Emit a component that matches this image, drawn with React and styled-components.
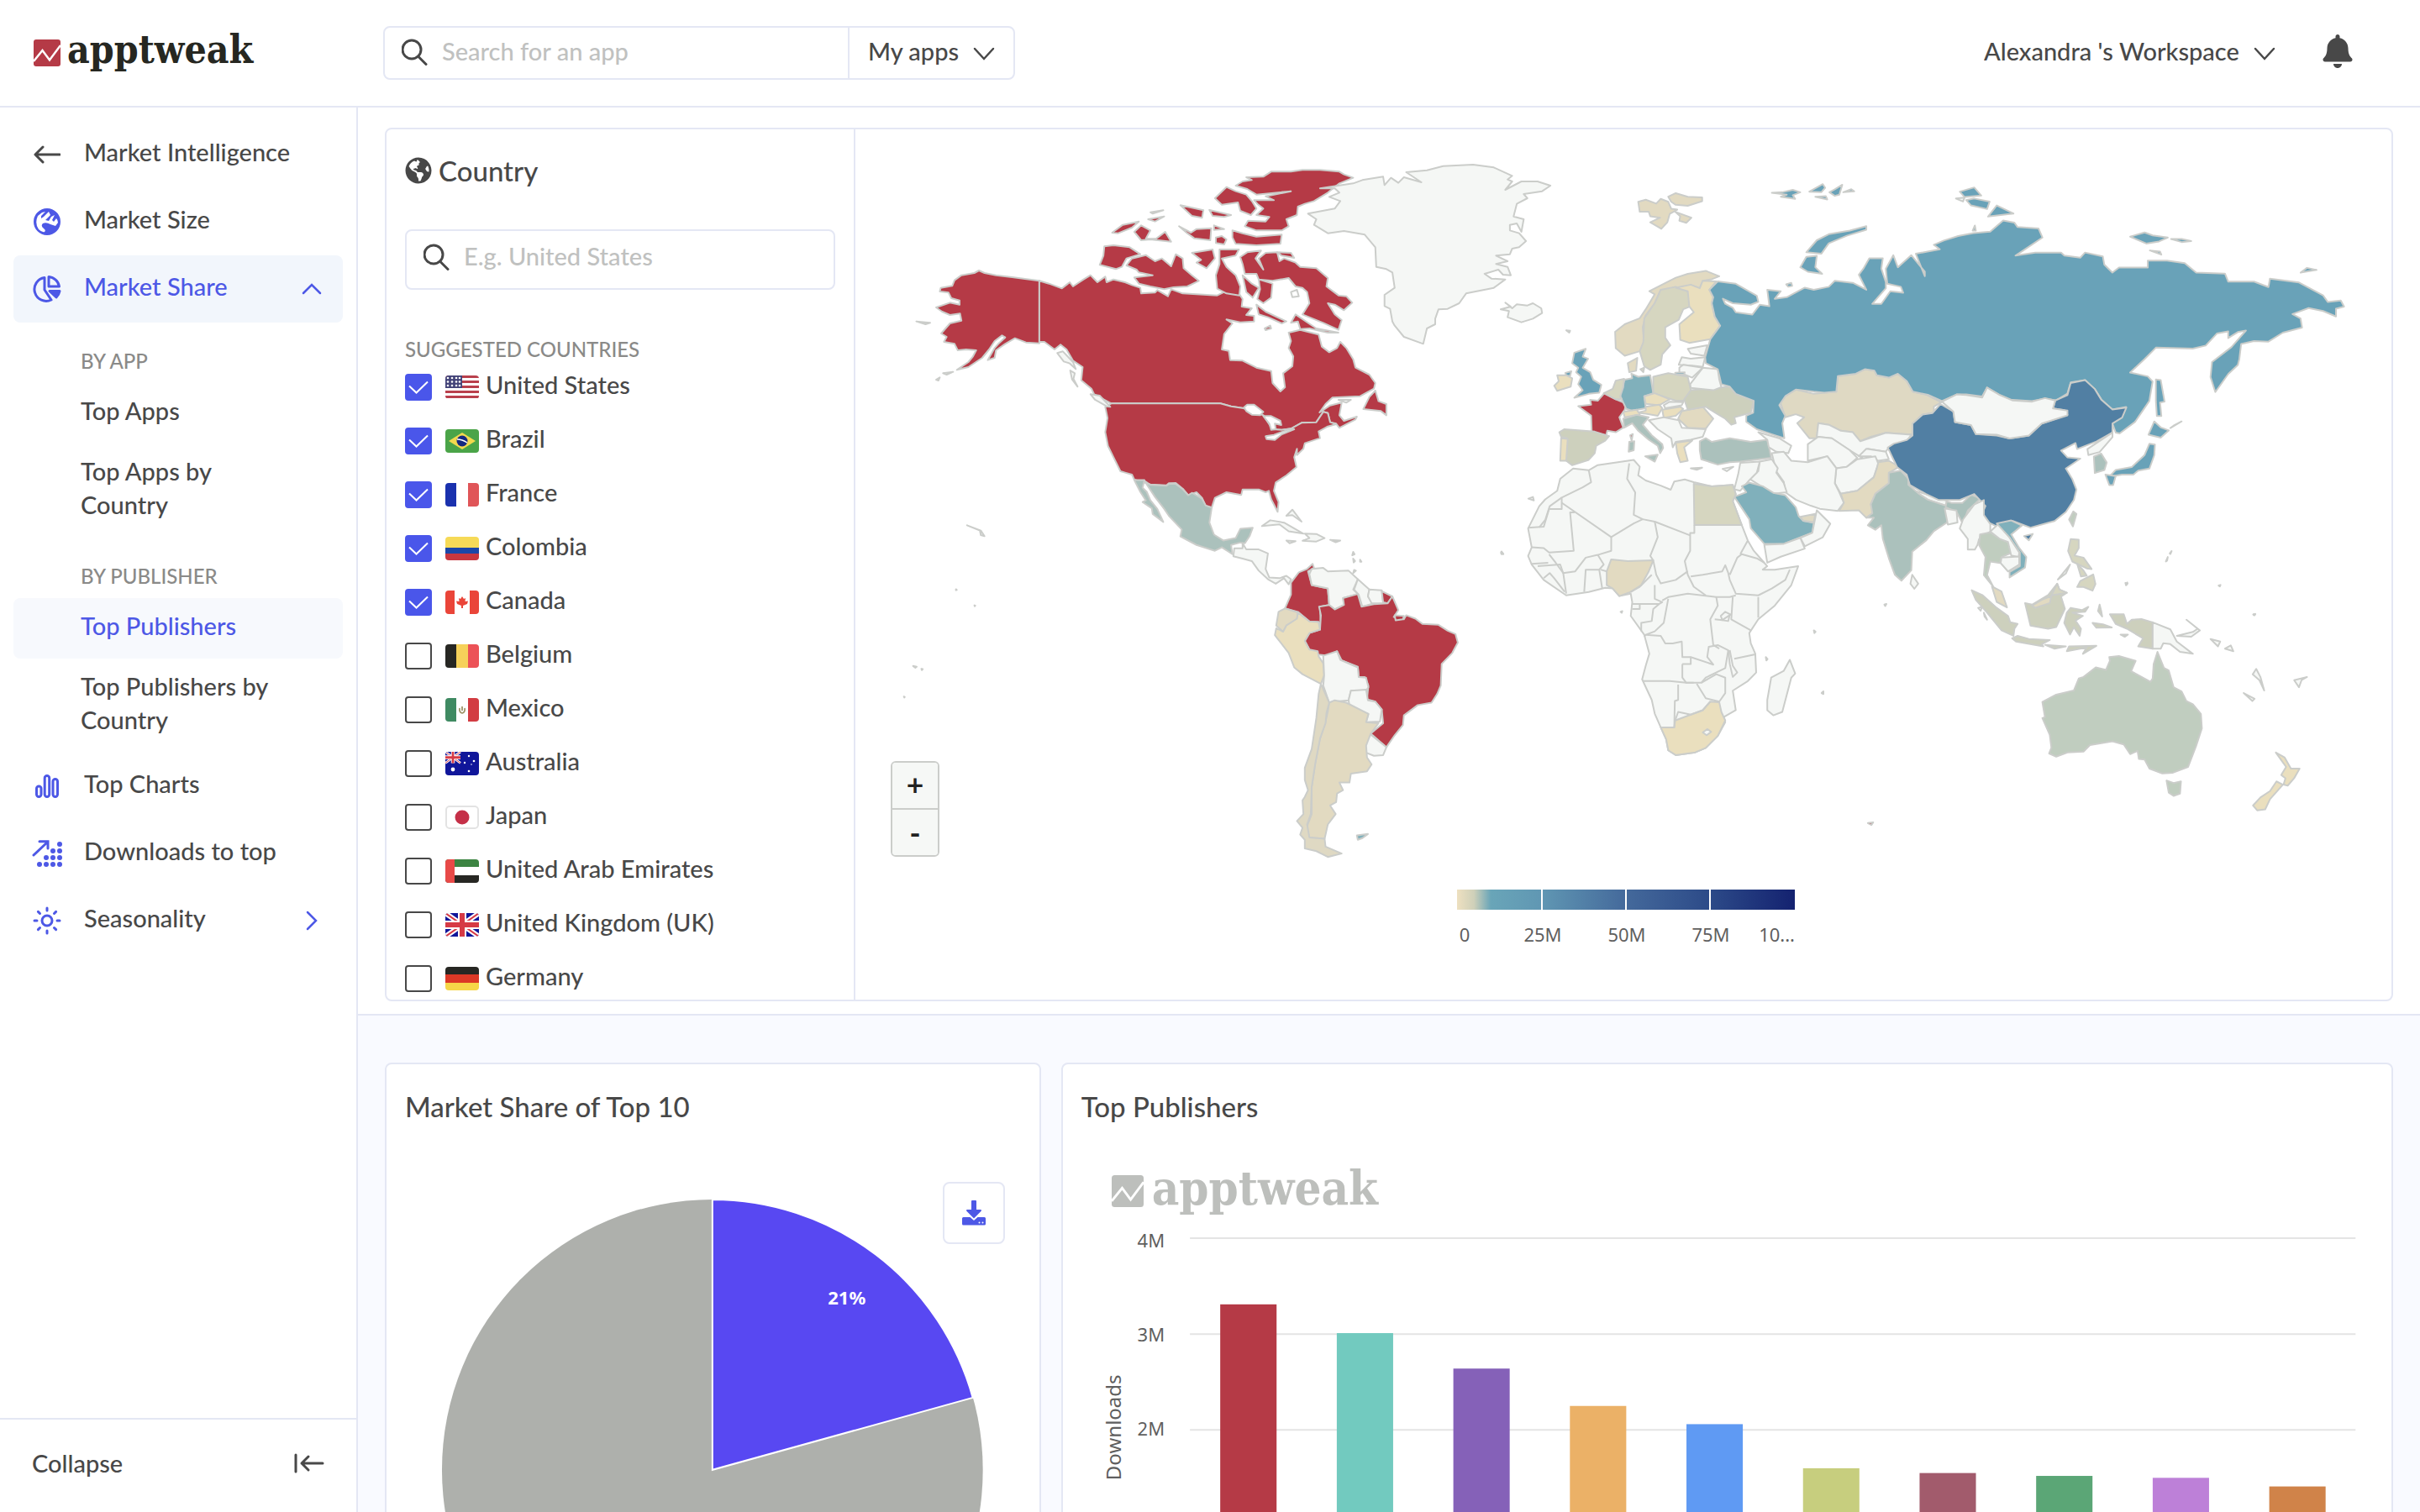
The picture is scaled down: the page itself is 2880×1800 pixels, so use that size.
import React, { Component } from 'react'
import styled, { createGlobalStyle, css } from 'styled-components'
import { FaBell, FaGlobeAmericas } from 'react-icons/fa'
import { Sun } from 'lucide-react'

const colors = {
  text: '#484848',
  dark: '#262721',
  muted: '#8a8a88',
  placeholder: '#c0c1c0',
  blue: '#4d58e6',
  border: '#e4e7f4',
  active: '#f2f6fc',
  subActive: '#f7f9fd',
  page: '#f9faff',
  red: '#b53a46',
  land: '#f5f7f5',
  coast: '#cbcdca',
  axis: '#5f5f5f',
}

const font = `Lato, 'Open Sans', sans-serif`
const chartFont = `'Noto Sans', 'Open Sans', sans-serif`

const GlobalStyle = createGlobalStyle`
  *, *::before, *::after {
    box-sizing: border-box;
  }

  body {
    margin: 0;
    font-family: ${font};
    font-size: 29px;
    font-weight: 500;
    line-height: 40px;
    color: ${colors.text};
    background: white;
  }

  button, input, select {
    font: inherit;
    color: inherit;
  }
`

/* ---------- layout ---------- */

const box = css`
  border: 2px solid ${colors.border};
  border-radius: 8px;
  background: white;
`

const bareButton = css`
  border: 0;
  padding: 0;
  background: none;
  cursor: pointer;
`

const Page = styled.div`
  display: flex;
  flex-direction: column;
  height: 100vh;
  overflow: hidden;
`

const Header = styled.header`
  display: flex;
  align-items: center;
  flex-shrink: 0;
  height: 128px;
  padding: 0 78px 0 40px;
  border-bottom: 2px solid ${colors.border};
`

const Brand = styled.a`
  display: flex;
  align-items: center;
  gap: 8px;
  width: 416px;
  color: ${colors.dark};
  text-decoration: none;
`

const Wordmark = styled.span`
  font-family: 'DejaVu Serif Condensed', 'DejaVu Serif', serif;
  font-size: ${props => (props.$large ? '56px' : '46px')};
  font-weight: bold;
  line-height: 56px;
  margin-top: -8px;
`

const SearchBar = styled.div`
  ${box}
  display: flex;
  width: 752px;
  height: 64px;
`

const SearchField = styled.div`
  display: flex;
  align-items: center;
  gap: 16px;
  flex: 1;
  min-width: 0;
  padding: 0 20px 2px;
`

const Input = styled.input`
  flex: 1;
  min-width: 0;
  padding: 0 0 2px;
  border: 0;
  outline: 0;
  background: none;

  &::placeholder {
    color: ${colors.placeholder};
    opacity: 1;
  }
`

const AppPicker = styled.div`
  display: flex;
  align-items: center;
  padding: 0 22px;
  border-left: 2px solid ${colors.border};
`

const SelectBox = styled.div`
  display: grid;
  align-items: center;

  > * {
    grid-area: 1 / 1;
  }

  svg {
    justify-self: end;
    pointer-events: none;
  }
`

const Select = styled.select`
  appearance: none;
  padding: 0 42px 4px 0;
  border: 0;
  outline: 0;
  background: none;
  cursor: pointer;
`

const Account = styled.div`
  display: flex;
  align-items: center;
  gap: 54px;
  margin-left: auto;
`

const BellButton = styled.button`
  ${bareButton}
  display: flex;
  padding-bottom: 4px;
`

const Body = styled.div`
  display: flex;
  flex: 1;
  min-height: 0;
`

const Sidebar = styled.aside`
  display: flex;
  flex-direction: column;
  flex-shrink: 0;
  width: 426px;
  border-right: 2px solid ${colors.border};
`

const Nav = styled.nav`
  flex: 1;
  padding: 16px;
`

const NavLink = styled.a`
  display: flex;
  align-items: center;
  gap: 28px;
  height: 80px;
  padding: 0 24px;
  border-radius: 8px;
  color: ${props => (props.$active ? colors.blue : colors.text)};
  background: ${props => (props.$active ? colors.active : 'none')};
  text-decoration: none;

  > svg {
    margin-left: auto;
  }
`

const NavText = styled.span`
  padding-bottom: 6px;
`

const NavIcon = styled.div`
  display: flex;
  justify-content: center;
  width: 32px;
  flex-shrink: 0;

  svg {
    flex-shrink: 0;
  }
`

const NavLabel = styled.div`
  padding: 26px 80px 6px;
  font-size: 24px;
  color: ${colors.muted};
`

const SubLink = styled.a`
  display: block;
  padding: 13px 80px 19px;
  border-radius: 8px;
  color: ${props => (props.$active ? colors.blue : colors.text)};
  background: ${props => (props.$active ? colors.subActive : 'none')};
  text-decoration: none;
`

const Collapse = styled.button`
  ${bareButton}
  display: flex;
  align-items: center;
  justify-content: space-between;
  height: 112px;
  padding: 0 38px 6px;
  border-top: 2px solid ${colors.border};
`

const Main = styled.main`
  flex: 1;
  min-width: 0;
  background: ${colors.page};
`

const Top = styled.section`
  padding: 24px 32px 15px;
  border-bottom: 2px solid ${colors.border};
  background: white;
`

const MapPanel = styled.div`
  ${box}
  display: grid;
  grid-template-columns: 558px 1fr;
`

const Countries = styled.div`
  height: 0;
  min-height: 100%;
  padding: 0 22px;
  border-right: 2px solid ${colors.border};
  overflow: hidden;
`

const PanelHead = styled.div`
  display: flex;
  align-items: center;
  gap: 8px;
  padding: 29px 0 30px;
`

const Title = styled.h2`
  margin: 0;
  font-size: 33px;
  font-weight: 500;
  line-height: 40px;
`

const CountrySearch = styled.div`
  ${box}
  display: flex;
  align-items: center;
  gap: 16px;
  height: 72px;
  margin: 20px 0 58px;
  padding: 0 20px 6px;
`

const ListLabel = styled.div`
  font-size: 24px;
  line-height: 26px;
  color: ${colors.muted};
`

const CountryRow = styled.label`
  display: flex;
  align-items: center;
  height: 64px;
  cursor: pointer;
`

const CountryName = styled.span`
  padding-bottom: 6px;
`

const Check = styled.div`
  display: grid;
  margin-right: 16px;

  > * {
    grid-area: 1 / 1;
    pointer-events: none;
  }
`

const Checkbox = styled.input`
  appearance: none;
  width: 32px;
  height: 32px;
  margin: 0;
  border: 2px solid ${colors.text};
  border-radius: 4px;
  background: white;

  &:checked {
    border-color: #4a56ea;
    background: #4a56ea;
  }
`

const Flag = styled.svg`
  width: 40px;
  height: 28px;
  margin-right: 8px;
  border-radius: 4px;
`

const MapArea = styled.div`
  position: relative;
`

const ChartSvg = styled.svg`
  display: block;
  width: 100%;
`

const AxisText = styled.text`
  font-family: ${chartFont};
  font-size: 22px;
  font-weight: 400;
  fill: ${colors.axis};
  text-anchor: ${props => props.$anchor};
`

const AxisTitle = styled.text`
  font-family: ${chartFont};
  font-size: 24px;
  font-weight: 400;
  fill: ${colors.axis};
  text-anchor: middle;
`

const SliceText = styled.text`
  font-family: ${chartFont};
  font-size: 22px;
  font-weight: bold;
  fill: white;
  text-anchor: middle;
`

const Zoom = styled.div`
  position: absolute;
  left: 42px;
  bottom: 170px;
  display: flex;
  flex-direction: column;
  width: 58px;
  border: 2px solid ${colors.coast};
  border-radius: 6px;
  overflow: hidden;
`

const ZoomButton = styled.button`
  ${bareButton}
  height: 54px;
  background: #f6f8f6;
  color: #222;
  font-family: ${chartFont};
  font-size: 36px;
  font-weight: 600;

  & + & {
    height: 56px;
    border-top: 2px solid ${colors.coast};
  }
`

const Cards = styled.section`
  display: grid;
  grid-template-columns: repeat(12, 1fr);
  gap: 24px;
  padding: 56px 32px;
`

const Card = styled.article`
  ${box}
  grid-column: span ${props => props.$span};
  min-width: 0;
`

const CardHead = styled.div`
  padding: 30px 22px 41px;
`

const ChartArea = styled.div`
  position: relative;
`

const Download = styled.button`
  ${box}
  position: absolute;
  top: 29px;
  right: 41px;
  display: grid;
  place-items: center;
  width: 74px;
  height: 74px;
  cursor: pointer;
`

const Watermark = styled.div`
  position: absolute;
  top: 16px;
  left: 58px;
  display: flex;
  align-items: center;
  gap: 10px;
  color: #bdbfbc;
`

/* ---------- icons ---------- */

const SearchIcon = () => (
  <svg width="32" height="32" viewBox="0 0 32 32" fill="none" stroke={colors.text} strokeWidth="3" aria-hidden="true">
    <circle cx="12" cy="13" r="11" />
    <path d="M19.500 21 L29 30.500" strokeLinecap="round" />
  </svg>
)

const chevrons = {
  down: 'M2 8 L13 20 L24 8',
  up: 'M3 18 L13 8 L23 18',
  right: 'M8 3 L18 13 L8 23',
}

const Chevron = ({ to = 'down', color = colors.text }) => (
  <svg width="26" height="26" viewBox="0 0 26 26" fill="none" stroke={color} strokeWidth="2.5" strokeLinecap="round" aria-hidden="true">
    <path d={chevrons[to]} />
  </svg>
)

const BackIcon = () => (
  <svg width="32" height="32" viewBox="0 0 32 32" fill="none" stroke={colors.text} strokeWidth="3" strokeLinecap="round" strokeLinejoin="round">
    <path d="M31 16 H2 M11 7 L2 16 L11 25" />
  </svg>
)

const WorldIcon = () => (
  <svg width="32" height="32" viewBox="0 0 32 32" fill="none">
    <circle cx="16" cy="16" r="14.500" fill={colors.blue} stroke={colors.blue} strokeWidth="3" />
    <path d="M5 9 Q1 18 6 25 Q10 29 13 28 Q15 26 12 24 Q8 21 11 18 Q15 16 20 19 L26 21 L29 17 Q29 14 27 12 L24 16 L22 14 L25 8 L21 10 L18 15 L14 14 L20 8 L18 4 L12 10 L9 12 L9 9 L14 4 L10 5 Z" fill="white" />
  </svg>
)

const ShareIcon = () => (
  <svg width="34" height="32" viewBox="0 0 34 32" fill="none" stroke={colors.blue} strokeWidth="3" strokeLinejoin="round">
    <path d="M14 2.500 A14 14 0 1 0 22 29 L14 17 Z" />
    <path d="M19 1.500 A14 14 0 0 1 31.500 13 H19 Z" />
    <path d="M20 18.500 H32 A14 14 0 0 1 28 26 Z" fill={colors.blue} />
  </svg>
)

const ChartsIcon = () => (
  <svg width="32" height="32" viewBox="0 0 32 32" fill="none" stroke={colors.blue} strokeWidth="3">
    <rect x="3.500" y="16" width="5.500" height="12.500" rx="2.700" />
    <rect x="13.200" y="3.500" width="5.500" height="25" rx="2.700" />
    <rect x="23" y="7.500" width="5.500" height="21" rx="2.700" />
  </svg>
)

const dots = [
  [33, 5],
  [25, 13], [33, 13],
  [17, 21], [25, 21], [33, 21],
  [9, 29], [17, 29], [25, 29], [33, 29],
]

const DownloadsIcon = () => (
  <svg width="36" height="32" viewBox="0 0 36 32" fill="none" stroke={colors.blue} strokeWidth="3" strokeLinecap="round">
    <path d="M2 18 L19 2 M9 1.800 H19 V10" />
    {dots.map(([x, y]) => (
      <circle key={`${x}-${y}`} cx={x} cy={y} r="3" fill={colors.blue} stroke="none" />
    ))}
  </svg>
)

const CollapseIcon = () => (
  <svg width="36" height="24" viewBox="0 0 36 24" fill="none" stroke={colors.text} strokeWidth="3" strokeLinecap="round" strokeLinejoin="round">
    <path d="M2 2 V22 M34 12 H9 M17 4 L9 12 L17 20" />
  </svg>
)

const DownloadIcon = () => (
  <svg width="28" height="30" viewBox="0 0 28 30" fill={colors.blue} aria-hidden="true">
    <path d="M11 1 a1 1 0 0 1 1-1 h4 a1 1 0 0 1 1 1 V11 H22 a1 1 0 0 1 .7 1.700 L14 21.500 L5.300 12.700 A1 1 0 0 1 6 11 H11 Z" />
    <path d="M0 21.500 a1.500 1.500 0 0 1 1.500-1.500 H9.500 L14 24 L18.500 20 H26.500 a1.500 1.500 0 0 1 1.500 1.500 V28 a1.500 1.500 0 0 1 -1.500 1.500 H1.500 a1.500 1.500 0 0 1 -1.500 -1.500 Z" />
    <circle cx="20.500" cy="26.500" r="1" fill="white" />
    <circle cx="24.500" cy="26.500" r="1" fill="white" />
  </svg>
)

const LogoMark = ({ size, fill }) => (
  <svg width={size} height={size} viewBox="0 0 32 32" aria-hidden="true">
    <rect width="32" height="32" rx="3" fill={fill} />
    <path d="M0 26 L10.500 13 L19 24.500 L32 7" fill="none" stroke="white" strokeWidth="2.500" />
  </svg>
)

/* ---------- flags, all on a 40 x 28 field ---------- */

const bands = (list, vertical) =>
  list.map(([fill, at, size], i) =>
    vertical ? (
      <rect key={i} x={at} width={size} height="28" fill={fill} />
    ) : (
      <rect key={i} y={at} width="40" height={size} fill={fill} />
    )
  )

const UnionJack = () => (
  <g>
    <rect width="40" height="28" fill="#10169a" />
    <path d="M0 0 L40 28 M40 0 L0 28" stroke="white" strokeWidth="6" />
    <path d="M0 0 L40 28 M40 0 L0 28" stroke="#d63a45" strokeWidth="2" />
    <path d="M20 0 V28 M0 14 H40" stroke="white" strokeWidth="10" />
    <path d="M20 0 V28 M0 14 H40" stroke="#d63a45" strokeWidth="6" />
  </g>
)

const flags = {
  us: (
    <g>
      <rect width="40" height="28" fill="white" />
      {[0, 6, 12, 18, 24].map(y => (
        <rect key={y} y={y} width="40" height="3" fill="#b9404c" />
      ))}
      <rect width="20" height="15" fill="#444479" />
      {[3, 7.5, 12].map(y =>
        [3, 8, 13, 17].map(x => <circle key={`${x}-${y}`} cx={x} cy={y} r="1.300" fill="white" />)
      )}
    </g>
  ),
  br: (
    <g>
      <rect width="40" height="28" fill="#4aa448" />
      <path d="M4 14 L20 4 L36 14 L20 24 Z" fill="#f2d94e" />
      <circle cx="20" cy="14" r="6.500" fill="#152880" />
      <path d="M14 12 Q20 12 26 16" fill="none" stroke="white" strokeWidth="1.500" />
    </g>
  ),
  fr: bands([['#1a31ae', 0, 13], ['white', 13, 14], ['#e05558', 27, 13]], true),
  co: bands([['#f6da57', 0, 13], ['#1b47a8', 13, 7], ['#c8373f', 20, 8]]),
  ca: (
    <g>
      {bands([['#ea4539', 0, 11], ['white', 11, 18], ['#ea4539', 29, 11]], true)}
      <path d="M20 7 L22 10 L24 9 L23.500 13 L27 12.500 L26 16 L21 18 V21 H19 V18 L14 16 L13 12.500 L16.500 13 L16 9 L18 10 Z" fill="#ea4539" />
    </g>
  ),
  be: bands([['#272723', 0, 13], ['#f6d15a', 13, 14], ['#ec5257', 27, 13]], true),
  mx: (
    <g>
      {bands([['#3f8a62', 0, 13], ['white', 13, 14], ['#d23c42', 27, 13]], true)}
      <path d="M17 12 Q16 17 20 18 Q24 17 23 12 M20 10 V15" fill="none" stroke="#9d9468" strokeWidth="1.800" />
    </g>
  ),
  au: (
    <g>
      <rect width="40" height="28" fill="#10169a" />
      <g transform="scale(.45 .48)"><UnionJack /></g>
      {[[28, 5, 1.2], [34, 11, 1.3], [23, 13, 1.2], [31, 15, 0.8], [28, 23, 1.3], [9, 21, 2.4]].map(([x, y, r]) => (
        <circle key={`${x}-${y}`} cx={x} cy={y} r={r} fill="white" />
      ))}
    </g>
  ),
  jp: (
    <g>
      <rect x="1" y="1" width="38" height="26" rx="4" fill="white" stroke="#e3e3e3" strokeWidth="2" />
      <circle cx="20" cy="14" r="8.500" fill="#c53048" />
    </g>
  ),
  ae: (
    <g>
      {bands([['#3c8442', 0, 9], ['white', 9, 10], ['#272723', 19, 9]])}
      <rect width="11" height="28" fill="#e84a48" />
    </g>
  ),
  gb: <UnionJack />,
  de: bands([['#272723', 0, 9], ['#dc3826', 9, 10], ['#f6d648', 19, 9]]),
}

const countries = [
  ['us', 'United States'],
  ['br', 'Brazil'],
  ['fr', 'France'],
  ['co', 'Colombia'],
  ['ca', 'Canada'],
  ['be', 'Belgium'],
  ['mx', 'Mexico'],
  ['au', 'Australia'],
  ['jp', 'Japan'],
  ['ae', 'United Arab Emirates'],
  ['gb', 'United Kingdom (UK)'],
  ['de', 'Germany'],
]

/* ---------- world map ---------- */

const fills = {
  r: colors.red,
  l: colors.land,
  w: '#ffffff',
  ru: '#69a2b8',
  cn: '#517fa3',
  sa: '#80b0bb',
  mx: '#abc1bc',
  au: '#c0cdbf',
  se: '#d6d6c0',
  es: '#cdd0bd',
  kz: '#dfd9c3',
  no: '#e2dac1',
  fi: '#eadfbe',
}

// each sheet of outlines keeps its own grid, placed on the map by its transform
const sheets = [
  {
    transform: 'translate(22 7) scale(.54847 .33333)',
    shapes: [
      ['r', '359,520 300,507 265,500 240,492 228,483 218,492 190,500 175,518 170,538 145,545 143,558 162,562 168,582 186,590 186,605 165,598 135,615 148,630 165,642 187,637 190,662 165,672 146,708 158,720 152,738 175,745 182,768 200,765 222,768 215,790 205,810 180,838 205,828 235,795 250,765 262,735 278,715 285,722 270,745 262,760 247,803 262,795 265,768 285,745 306,725 330,740 359,743'],
      ['r', '359,520 380,530 408,547 425,525 432,540 455,515 470,500 485,525 502,505 505,525 520,515 545,525 560,535 578,545 580,565 610,562 615,553 638,575 645,550 670,565 745,572 760,560 765,545 790,560 800,585 798,612 820,618 808,642 825,645 825,665 795,668 765,658 778,672 760,710 755,765 770,770 773,803 800,805 830,830 862,842 865,885 882,915 892,900 888,850 908,825 910,790 900,760 905,735 900,705 925,695 965,712 972,755 988,775 1005,760 1012,738 1025,760 1040,800 1045,830 1075,855 1088,885 1085,905 1055,932 995,937 980,960 967,990 990,965 1015,955 1010,1000 1020,1020 1048,1005 1045,1015 1010,1045 1003,1030 990,1025 985,992 975,988 960,1025 928,1027 905,1048 885,1052 865,1050 845,1000 802,975 775,968 752,958 515,958 478,925 472,905 450,875 453,828 432,805 418,765 405,748 392,765 370,738 359,738'],
      ['r', '515,958 752,958 775,968 802,975 845,1000 865,1050 885,1052 905,1048 928,1027 960,1025 975,988 985,992 990,1025 1003,1032 985,1040 965,1058 968,1082 935,1100 932,1120 918,1142 918,1120 912,1150 917,1185 895,1215 872,1240 868,1270 878,1310 876,1345 862,1300 857,1270 850,1275 835,1265 800,1265 797,1285 765,1275 740,1295 733,1330 720,1325 712,1295 700,1275 682,1285 670,1262 655,1242 640,1243 635,1250 600,1247 565,1230 560,1212 545,1205 535,1200 520,1150 508,1110 502,1060 507,1010 502,970'],
      ['w', '803,972 810,962 825,962 845,988 838,1000 820,998 808,985'],
      ['w', '845,1003 862,1003 882,1020 884,1035 870,1030 872,1050 862,1052 858,1030'],
      ['w', '850,1075 868,1070 905,1048 912,1050 885,1068 870,1088 852,1085'],
      ['l', '470,925 490,930 513,970 505,968 480,945'],
      ['l', '398,778 410,772 432,810 438,835 425,815 412,808'],
      ['l', '426,840 436,850 433,870 442,898 430,872'],
      ['r', '785,180 800,165 820,160 808,150 845,148 862,130 905,130 930,124 968,124 1010,130 1020,140 1040,152 1010,172 985,205 955,235 935,245 920,255 918,285 895,300 900,325 885,340 830,340 805,325 812,305 850,308 858,292 830,285 845,262 832,245 825,232 868,232 850,218 905,200 830,212 810,192'],
      ['r', '765,185 740,225 755,248 790,240 795,270 818,285 830,262 820,235 808,212 785,200'],
      ['r', '778,340 800,350 830,362 885,355 882,388 830,393 785,388 778,365'],
      ['r', '500,397 520,393 555,400 578,425 548,440 538,470 525,478 490,463 498,430'],
      ['r', '548,465 560,440 590,428 610,450 625,440 645,468 655,425 670,440 672,475 690,500 705,520 680,540 650,543 630,550 600,540 575,530 565,508 605,500 575,490 570,480'],
      ['r', '690,420 735,408 740,440 722,475 700,455 710,445'],
      ['r', '750,408 792,408 785,430 755,440 765,470 785,500 795,540 793,572 765,565 745,548 742,500 750,460'],
      ['r', '565,345 580,375 600,372 645,380 632,345 612,370 590,370 600,340 580,322'],
      ['r', '517,348 540,320 575,308 560,330 530,350'],
      ['r', '665,250 715,268 712,295 690,288'],
      ['r', '662,325 688,348 700,335 732,332 730,375 695,368 680,350'],
      ['r', '728,267 775,285 760,292 735,288'],
      ['r', '595,300 630,290 610,308'],
      ['r', '600,275 628,268 605,280'],
      ['r', '742,365 755,360 765,372 760,390 742,385'],
      ['r', '738,322 760,335 738,338'],
      ['r', '800,460 795,435 810,418 840,412 828,440 845,480 835,440 850,420 875,418 880,450 890,440 915,455 925,470 960,475 985,510 982,540 1008,572 1025,575 1038,598 1020,625 1000,605 985,600 1000,640 1015,660 1008,695 975,670 930,640 945,600 940,560 930,545 915,540 900,510 865,520 835,515 830,495 805,495'],
      ['r', '875,418 905,420 912,438 885,430'],
      ['r', '835,515 865,530 862,580 845,600 832,585 838,550'],
      ['r', '800,500 820,530 835,545 822,580 808,560'],
      ['r', '830,605 850,630 895,665 885,672 855,650 835,640'],
      ['w', '905,560 918,552 922,575 908,578'],
      ['r', '915,640 960,690 1008,705 985,705 945,690 925,692 920,665 905,670'],
      ['r', '848,690 860,680 862,690 850,696'],
      ['r', '1088,912 1075,935 1062,978 1100,985 1112,1000 1112,960 1095,950'],
      ['l', '1008,945 1035,945 1025,955'],
      ['l', '1040,172 1060,160 1105,148 1108,178 1122,152 1138,170 1150,150 1188,168 1155,132 1200,125 1235,110 1300,105 1345,115 1385,145 1375,158 1385,165 1370,195 1405,165 1440,165 1468,180 1450,200 1410,210 1418,225 1395,245 1388,290 1410,300 1405,345 1395,315 1380,320 1380,340 1400,350 1415,378 1400,400 1385,405 1380,425 1350,430 1375,450 1350,460 1375,470 1382,500 1365,498 1355,480 1325,495 1340,512 1370,515 1345,545 1285,565 1270,600 1245,620 1225,622 1218,655 1218,675 1200,690 1192,745 1150,720 1130,680 1125,665 1120,620 1108,610 1108,570 1130,545 1125,490 1112,478 1090,470 1088,400 1065,355 1020,342 985,350 955,320 960,300 942,280 1000,262 1012,235 988,220 1010,205 1000,190 968,190'],
      ['l', '1370,598 1382,612 1360,622 1378,628 1375,650 1405,668 1430,655 1450,635 1448,618 1430,600 1418,608 1395,604 1385,618'],
      ['l', '92,665 122,670 112,675'],
      ['l', '135,873 143,865 140,876'],
      ['l', '150,850 172,845 158,855'],
      ['l', '202,1393 232,1412 240,1432 232,1428 230,1412'],
    ],
  },
  {
    transform: 'translate(22 407) scale(.54847 .40816)',
    shapes: [
      ['mx', '565,26 587,26 583,48 592,60 600,85 615,110 628,148 605,125 603,108 583,90 590,85 578,60'],
      ['mx', '587,28 600,40 635,42 640,37 655,37 670,52 682,70 690,63 700,70 712,80 720,100 733,106 728,150 738,185 758,202 785,195 795,168 822,165 815,190 805,210 795,208 775,215 778,242 755,222 740,232 700,215 665,190 668,170 640,130 630,110 610,75'],
      ['l', '780,248 782,225 800,225 800,210 808,228 835,228 855,240 850,285 858,310 880,312 895,305 905,315 900,330 890,312 872,328 855,315 835,290 820,262 800,255'],
      ['l', '842,160 860,143 890,150 932,182 900,175 880,155'],
      ['l', '935,182 960,183 978,195 960,205 930,203 945,195'],
      ['l', '895,202 915,204 902,210'],
      ['l', '990,200 1012,202 1002,207'],
      ['l', '895,130 908,112 928,147 908,128'],
      ['l', '1040,235 1043,242 1038,245'],
      ['l', '1040,255 1044,262 1041,266'],
      ['l', '1055,258 1058,264 1055,264'],
      ['l', '1042,288 1046,290 1040,297'],
      ['r', '952,270 955,282 942,292 950,332 985,342 988,390 968,395 970,462 965,440 945,438 920,410 892,400 905,360 905,325 922,295 940,285'],
      ['l', '950,285 975,282 985,292 1030,290 1050,315 1040,345 1050,358 1018,370 1020,390 1000,403 988,390 985,342 950,332 945,300'],
      ['l', '1050,315 1075,345 1072,365 1085,385 1060,395 1052,360 1042,345'],
      ['l', '1075,345 1102,347 1105,385 1080,385 1072,365'],
      ['r', '1102,350 1125,365 1115,385 1105,382'],
      ['r', '1000,403 1020,390 1018,370 1050,358 1058,395 1085,388 1115,385 1125,365 1138,405 1128,425 1150,432 1155,420 1175,430 1190,445 1225,448 1245,465 1262,475 1267,500 1255,530 1232,562 1230,625 1222,650 1210,675 1180,682 1150,712 1148,740 1130,770 1112,805 1078,765 1105,735 1102,695 1088,672 1070,665 1073,625 1065,600 1052,600 1050,570 1015,552 1005,525 985,538 963,535 945,520 935,495 945,472 968,462 970,420 966,395 988,390'],
      ['r', '1130,420 1150,422 1148,432 1132,435'],
      ['no', '892,400 920,412 918,432 895,450 888,468 873,450 878,410'],
      ['fi', '920,412 945,438 965,440 968,462 945,472 935,495 945,520 963,525 965,540 975,560 977,595 970,620 930,592 912,572 900,530 870,478 873,458 888,468 895,450 918,430'],
      ['l', '975,538 1005,525 1012,550 1050,572 1052,600 1068,602 1073,630 1068,640 1035,640 1030,668 1000,672 988,675 975,625 977,595'],
      ['l', '1035,640 1068,637 1072,668 1088,672 1102,695 1098,730 1068,732 1073,708 1032,685 1030,668'],
      ['l', '1078,768 1112,805 1105,828 1085,830 1066,820 1068,790'],
      ['no', '988,675 1000,668 1025,675 1073,708 1068,732 1095,735 1078,765 1068,800 1070,835 1080,855 1070,875 1035,882 1032,908 1010,908 1018,930 1005,940 1003,965 990,975 1002,1000 985,1030 978,1072 940,1068 940,1035 950,1000 950,920 958,850 968,780 980,730 985,700'],
      ['kz', '970,620 988,675 982,705 980,735 968,780 958,850 950,920 948,1000 940,1030 945,1068 978,1072 980,1095 1015,1115 985,1125 960,1108 935,1100 935,1075 925,1060 930,1040 918,1020 932,1000 930,960 935,950 942,930 935,900 935,865 950,810 960,720 965,650'],
      ['sa', '1048,1062 1072,1058 1060,1070 1050,1075'],
      ['l', '85,568 93,570 90,573'],
      ['l', '103,576 106,577 104,580'],
      ['l', '65,657 67,658 66,660'],
      ['l', '178,344 180,346 178,347'],
      ['l', '218,391 220,392 219,394'],
      ['l', '1362,234 1366,242 1361,240'],
      ['l', '1420,80 1430,75 1432,85'],
    ],
  },
  {
    transform: 'translate(762 7) scale(.35714)',
    shapes: [
      ['no', '475,222 500,215 535,228 550,212 575,222 585,245 605,248 580,262 572,290 552,312 515,290 548,275 515,270 510,255 480,255'],
      ['no', '575,205 600,193 640,205 688,207 688,220 640,235 600,232 585,222'],
      ['no', '598,255 625,265 652,275 635,292 612,285 615,270'],
      ['ru', '920,192 955,190 990,182 1015,190 990,200 998,212 950,205 970,198'],
      ['ru', '1045,188 1090,163 1098,175 1085,190'],
      ['ru', '1112,190 1130,180 1155,165 1145,198 1130,202'],
      ['ru', '1065,205 1100,203 1105,214'],
      ['ru', '1158,190 1185,180 1195,187'],
      ['no', '398,655 430,630 480,610 500,580 530,530 512,520 560,495 600,475 640,462 700,452 745,470 720,480 690,485 680,510 650,500 610,515 550,515 530,560 500,600 490,640 495,700 480,720 430,735 400,710'],
      ['se', '495,610 530,560 550,515 600,505 640,520 650,570 625,580 610,615 565,640 565,675 582,700 555,730 550,765 515,782 495,770 480,720 492,690'],
      ['fi', '600,508 650,498 680,510 690,485 735,487 712,515 725,540 720,560 730,605 748,635 715,680 645,692 615,682 612,630 660,590 645,570 640,520'],
      ['no', '440,760 472,742 468,785 445,790'],
      ['no', '482,780 495,775 492,790'],
      ['ru', '262,725 300,712 290,738 308,745 290,775 315,790 325,815 352,832 345,858 310,862 262,875 290,850 275,830 285,805 268,790 275,775 255,760'],
      ['ru', '232,792 252,787 248,802 235,802'],
      ['fi', '205,800 235,800 255,810 250,838 205,852 195,835 210,820'],
      ['r', '362,860 400,880 435,895 430,915 412,940 425,975 400,990 372,985 368,1000 320,990 318,935 275,903 318,898 315,882 340,885'],
      ['es', '228,980 330,988 378,1003 365,1018 335,1035 330,1060 310,1082 255,1100 235,1085 238,1010 218,1005 212,990'],
      ['fi', '218,1010 240,1012 235,1085 215,1085'],
      ['sa', '430,815 455,810 452,795 475,805 515,800 525,860 495,870 500,910 455,918 435,912 415,870 420,840'],
      ['se', '360,860 390,845 400,818 428,812 425,840 415,870 420,880 400,880'],
      ['se', '525,805 575,793 640,805 650,850 640,885 600,885 570,875 525,860'],
      ['fi', '495,870 530,860 580,880 545,900 500,895'],
      ['l', '560,900 580,888 625,890 620,900 565,910'],
      ['fi', '500,905 545,898 555,910 540,935 500,928 470,925 500,918'],
      ['fi', '555,915 615,905 625,912 600,935 560,942'],
      ['fi', '425,922 470,915 480,930 430,940'],
      ['no', '620,920 690,905 725,945 700,978 640,975 608,945'],
      ['es', '628,880 650,850 780,838 800,862 860,885 850,925 795,940 800,960 785,965 765,945 740,930 700,905 640,915'],
      ['l', '648,830 690,775 740,780 745,815 752,840 725,850 650,842'],
      ['l', '640,712 705,700 695,735 650,728'],
      ['l', '610,765 620,740 650,745 698,740 690,772 655,768'],
      ['l', '612,775 625,765 690,775 655,808 612,790'],
      ['ru', '598,792 630,790 628,798 600,797'],
      ['mx', '425,945 470,932 510,940 490,965 520,1000 555,1030 558,1042 548,1060 540,1035 510,1015 475,985 455,960 428,975'],
      ['mx', '498,1070 540,1065 530,1088'],
      ['mx', '445,1022 462,1020 460,1050 443,1055'],
      ['r', '448,1000 457,996 453,1018'],
      ['l', '510,950 560,940 610,950 620,975 700,980 690,1005 650,1015 600,1022 590,1040 585,1010 540,980'],
      ['fi', '600,1025 655,1018 628,1040 640,1085 615,1090 605,1060'],
      ['l', '650,1110 688,1108 670,1115'],
      ['l', '756,1112 792,1105 770,1120'],
      ['mx', '680,1020 700,1010 720,1022 780,1010 850,1022 905,1015 912,1045 918,1075 815,1088 780,1090 740,1098 685,1080 680,1050'],
      ['l', '875,990 945,1010 985,1035 975,1060 935,1055 910,1040 905,1015'],
      ['kz', '945,880 965,868 1000,848 1060,862 1135,855 1140,803 1200,795 1230,780 1262,785 1270,800 1310,808 1340,795 1370,820 1390,855 1435,865 1485,890 1460,905 1460,925 1420,932 1390,962 1392,998 1300,992 1250,1005 1215,1020 1190,990 1150,985 1110,965 1075,960 1070,1010 1045,1010 1005,960 1028,940 1000,930 965,940'],
      ['ru', '740,487 800,495 870,535 875,555 850,565 790,560 757,545 765,562 790,575 800,590 855,598 880,565 912,570 905,515 950,520 930,545 970,540 1030,508 1060,515 1110,505 1130,485 1190,492 1235,515 1210,465 1225,445 1245,410 1290,410 1285,445 1300,490 1300,510 1255,562 1285,562 1315,520 1358,525 1350,505 1305,495 1300,445 1325,400 1340,440 1385,400 1430,455 1430,470 1400,395 1480,380 1460,365 1493,351 1541,336 1592,326 1648,321 1691,284 1728,291 1739,306 1809,311 1822,341 1755,386 1732,401 1798,391 1884,391 1895,401 1948,408 1964,391 2023,404 2028,431 2055,458 2077,441 2173,441 2173,418 2237,418 2296,426 2334,458 2430,461 2441,488 2527,488 2575,506 2580,478 2677,491 2757,534 2773,556 2816,551 2827,571 2800,578 2800,604 2757,586 2709,576 2655,596 2682,611 2687,641 2623,658 2575,688 2527,686 2484,696 2478,746 2473,766 2441,796 2398,856 2382,806 2387,756 2452,706 2500,651 2473,656 2441,676 2441,654 2403,661 2366,701 2323,711 2200,708 2162,746 2114,791 2173,804 2189,821 2178,886 2130,956 2079,994 2066,991 2055,961 2087,936 2101,906 2055,914 2018,881 1996,846 1964,816 1916,824 1905,861 1868,884 1830,878 1787,886 1712,881 1680,866 1637,841 1621,871 1568,864 1536,864 1487,886 1440,865 1390,855 1370,820 1340,795 1310,808 1270,800 1262,785 1230,780 1200,795 1140,803 1135,855 1095,858 1060,855 1000,848 965,870 945,900 965,935 955,960 962,1010 930,1000 870,980 835,955 835,935 858,925 860,885 800,862 780,838 752,830 745,800 740,780 700,760 698,740 715,680 748,635 730,605 720,560 725,540 712,515'],
      ['ru', '1035,390 1070,350 1110,330 1180,318 1235,303 1235,315 1170,335 1110,360 1085,395'],
      ['ru', '1035,405 1070,402 1065,440 1088,462 1040,455 1015,440'],
      ['ru', '968,497 985,492 988,502 975,505'],
      ['l', '1075,960 1110,965 1150,985 1190,990 1215,1020 1300,992 1385,998 1370,1020 1310,1040 1300,1055 1240,1045 1220,1075 1180,1050 1120,1010 1070,1005'],
      ['l', '1040,1030 1075,1005 1120,1010 1180,1050 1205,1075 1170,1105 1135,1110 1105,1070 1040,1085'],
      ['l', '1210,1070 1235,1045 1300,1055 1310,1080 1275,1085 1250,1070'],
      ['l', '1135,1110 1170,1105 1205,1080 1265,1070 1275,1095 1260,1140 1205,1185 1150,1195 1130,1160'],
      ['no', '1145,1252 1160,1225 1150,1195 1205,1185 1260,1140 1270,1110 1275,1090 1310,1085 1345,1105 1310,1125 1310,1160 1265,1195 1250,1230 1260,1260 1235,1275 1210,1250'],
      ['l', '920,1060 960,1055 985,1085 1040,1090 1105,1070 1135,1110 1130,1160 1145,1190 1160,1225 1140,1252 1080,1245 1050,1235 1000,1215 965,1190 960,1155 935,1120'],
      ['l', '880,1088 920,1080 940,1110 935,1125 960,1160 970,1190 925,1195 845,1145 875,1120'],
      ['l', '815,1092 880,1088 870,1125 845,1150 815,1185 795,1180 808,1130'],
      ['sa', '795,1205 835,1190 820,1170 845,1158 890,1170 925,1192 965,1200 1000,1240 1010,1270 1025,1285 1060,1292 1055,1325 1015,1340 960,1362 895,1362 850,1310 845,1280'],
      ['kz', '1015,1272 1065,1262 1060,1290 1025,1285'],
      ['l', '1070,1250 1115,1295 1090,1340 1030,1370 1015,1342 1055,1325 1062,1290'],
      ['l', '895,1365 960,1362 1015,1342 1030,1378 950,1405 905,1425'],
      ['l', '1395,1185 1430,1195 1503,1218 1500,1235 1440,1215'],
      ['mx', '1310,1125 1350,1118 1375,1145 1375,1165 1410,1195 1440,1215 1500,1235 1503,1220 1520,1226 1555,1226 1584,1198 1616,1211 1573,1251 1557,1296 1536,1256 1500,1240 1505,1290 1460,1320 1435,1350 1388,1388 1385,1450 1352,1485 1330,1465 1310,1410 1290,1345 1285,1300 1265,1315 1240,1300 1260,1275 1235,1275 1255,1260 1250,1230 1265,1195 1310,1160'],
      ['l', '1388,1465 1408,1495 1395,1512 1382,1495'],
      ['l', '235,650 248,652 245,658'],
    ],
  },
  {
    transform: 'translate(762 367) scale(.35714 .40816)',
    shapes: [
      ['l', '258,90 310,95 340,80 460,65 480,85 475,110 500,125 550,140 583,152 595,128 630,122 660,130 720,142 790,138 800,165 790,185 820,255 840,300 860,330 895,365 905,375 890,385 930,385 1008,375 985,430 930,490 875,530 845,570 850,600 865,630 868,685 840,710 790,738 800,795 760,815 765,830 740,870 700,905 665,918 600,926 575,912 568,880 550,845 530,805 520,765 488,705 500,665 512,630 495,575 450,520 455,480 450,455 412,462 390,440 365,438 310,450 235,460 160,415 120,370 108,345 120,320 108,265 145,200 165,180 205,155 215,120'],
      ['se', '660,135 720,142 790,138 800,165 790,185 820,255 662,255'],
      ['no', '385,355 440,360 525,358 510,390 485,430 450,450 412,462 390,440 370,430 370,390'],
      ['fi', '595,845 598,825 650,808 690,795 715,770 745,772 752,800 765,825 740,870 700,905 665,918 600,926 575,912 568,880 550,845'],
      ['l', '690,860 705,850 718,858 703,868'],
      ['l', '980,648 998,688 985,700 955,800 925,810 905,795 905,765 918,700 960,680'],
      ['l', '750,520 765,508 780,515 775,535 755,532'],
      ['r', '1240,1124 1258,1122 1252,1130'],
      ['l', '1060,562 1066,566 1062,570'],
      ['l', '1295,487 1302,485 1298,491'],
      ['l', '900,640 906,646 902,650'],
      ['l', '1086,745 1092,740 1092,748'],
      ['l', '416,508 422,506 420,511'],
      ['l', '18,334 24,337 20,340'],
    ],
    borders: [
      '310,95 318,130 290,145 220,175 220,208 178,208 160,260 108,263',
      '220,190 385,290 460,250 490,238 530,245 648,285',
      '445,75 438,120 465,160 460,225 490,238',
      '662,255 662,278 648,278 648,330 630,360 640,400 660,435 700,460',
      '220,175 180,200 165,240 145,262',
      '263,218 248,218 260,330 178,335 160,322 120,320',
      '385,290 385,330 340,342 300,350 265,390 225,395 200,365 178,340',
      '530,245 540,290 515,345 525,358 535,400 550,425 600,415 640,390',
      '340,342 360,370 345,385 300,385 295,450',
      '530,430 530,470 555,480 545,485 455,485',
      '450,450 480,435 520,400',
      '555,475 575,465 640,455 735,465 780,465 800,460',
      '650,405 690,400 755,390 765,372 775,395 780,415 800,455 875,460 920,440 965,415 980,385',
      '780,400 805,350 820,340 870,352 895,365',
      '840,300 815,340',
      '790,465 785,530 850,562',
      '875,465 875,525',
      '575,470 560,540 530,565 500,575 550,578 565,600 590,600 620,595 622,640 650,640',
      '735,465 740,490 715,530 725,605',
      '545,485 525,500 520,535 485,540 485,565',
      '480,485 480,500 455,500',
      '730,530 755,532 785,515',
      '500,575 495,580',
      '622,660 650,660 650,640 725,662 705,640 710,610 740,605 775,620 765,672 700,700 685,715 635,715 622,700 622,660',
      '780,620 790,665 805,685 790,698 780,660 775,620',
      '795,645 865,632',
      '490,710 580,710 635,715 660,715',
      '608,720 608,765 597,768 595,845 550,845',
      '670,718 700,760 745,770 765,745 765,700 735,690 685,715',
      '598,825 608,800 650,808 690,795 715,770',
      '225,395 235,455',
      '345,385 355,440',
      '370,390 350,385',
      '140,375 215,370 225,395',
      '160,410 180,395 195,410 230,450',
      '120,368 175,365',
      '725,605 745,615',
    ],
  },
  {
    transform: 'translate(1232 27) scale(.38265 .35714)',
    shapes: [
      ['ru', '215,132 260,118 282,145 230,150'],
      ['ru', '235,160 260,155 308,165 300,190 250,178'],
      ['l', '203,155 230,152 225,165'],
      ['ru', '303,215 330,178 382,205'],
      ['ru', '745,282 790,268 815,278 862,285 835,298 795,305'],
      ['ru', '872,290 905,290 935,297 905,300'],
      ['ru', '806,328 838,332 842,342'],
      ['ru', '1275,402 1295,386 1325,393'],
      ['ru', '255,262 262,245 265,262'],
      ['ru', '825,758 840,760 852,832 838,835 842,880 828,880 825,830'],
      ['cn', '-9,985 10,972 50,960 68,945 68,905 100,875 130,870 155,840 195,865 200,900 250,910 265,940 330,945 370,955 430,945 455,920 470,905 550,875 540,860 505,855 512,828 550,810 560,770 605,760 635,790 655,825 690,858 733,852 720,885 690,905 690,935 640,965 580,990 575,970 530,995 550,1018 590,1022 545,1055 565,1090 578,1125 570,1160 545,1200 510,1230 435,1252 380,1230 330,1248 305,1235 285,1205 295,1180 260,1140 215,1160 150,1160 110,1140 60,1110 50,1075 20,1050 2,1010'],
      ['cn', '415,1280 442,1273 430,1294'],
      ['l', '160,832 205,808 235,810 285,818 300,785 340,810 380,828 440,832 480,820 512,828 505,855 550,862 550,878 470,905 430,945 370,955 330,942 265,940 250,910 200,900 195,865'],
      ['l', '612,990 690,935 690,950 650,1000 615,1010'],
      ['mx', '632,1015 655,1005 672,1035 665,1060 635,1070'],
      ['ru', '820,898 840,918 865,928 840,952 802,942'],
      ['ru', '805,972 822,975 820,1010 805,1055 770,1062 755,1075 720,1075 680,1082 700,1060 750,1050 790,1010'],
      ['ru', '668,1075 700,1080 692,1110 680,1110'],
      ['l', '870,920 905,898 880,912'],
      ['l', '260,1175 290,1160 290,1210 310,1240 310,1265 275,1290 270,1310 262,1325 240,1325 240,1290 215,1255 225,1225'],
      ['l', '168,1188 205,1195 208,1235 178,1242'],
      ['au', '278,1275 310,1268 340,1288 365,1300 378,1335 345,1350 340,1370 310,1365 300,1410 320,1450 290,1410 295,1350 275,1310'],
      ['l', '310,1265 335,1240 370,1285 400,1335 398,1350 375,1345 365,1300 340,1290'],
      ['l', '345,1352 400,1348 400,1375 365,1398 342,1370'],
      ['sa', '330,1238 375,1228 408,1245 375,1275 400,1320 422,1350 418,1385 370,1418 370,1400 402,1380 402,1335 370,1285'],
      ['no', '315,1448 345,1465 362,1518 330,1500'],
      ['au', '568,1198 578,1206 567,1248 555,1225'],
      ['se', '560,1290 585,1292 585,1320 572,1345 600,1352 625,1390 610,1388 565,1365 552,1330'],
      ['se', '580,1372 600,1395 610,1412 592,1415'],
      ['se', '630,1408 637,1440 628,1462 600,1450 580,1450 590,1430'],
      ['l', '520,1425 558,1375 545,1405'],
      ['l', '856,1365 862,1350 860,1362'],
      ['l', '868,1338 874,1330 870,1340'],
      ['l', '730,1436 737,1438 732,1444'],
      ['l', '1020,1445 1026,1443 1024,1448'],
      ['l', '1128,1541 1134,1541 1130,1544'],
    ],
  },
  {
    transform: 'translate(1232 407) scale(.38265)',
    shapes: [
      ['es', '252,370 285,385 330,425 365,450 372,470 395,475 385,490 382,512 345,495 300,440 265,400'],
      ['l', '272,425 284,422 280,434'],
      ['l', '290,440 300,462 292,452'],
      ['es', '378,520 395,512 430,522 495,525 470,538 475,545 390,530'],
      ['es', '480,540 545,545 510,552'],
      ['es', '555,545 640,543 598,568 610,548 548,560'],
      ['es', '418,410 440,415 490,385 518,350 525,368 548,378 530,390 542,428 515,485 490,490 435,480'],
      ['no', '440,418 470,400 500,388 495,410 450,425'],
      ['se', '500,386 518,350 525,368 548,378'],
      ['es', '548,440 560,425 595,432 615,422 605,437 565,440 598,450 575,465 592,490 588,512 570,485 558,508 540,472'],
      ['es', '650,415 655,435 658,452 645,435'],
      ['es', '628,472 660,476 688,486 640,487'],
      ['es', '715,508 738,508 728,515'],
      ['es', '682,445 725,445 735,475 750,462 780,460 815,470 815,552 770,545 785,520 735,490 700,475'],
      ['l', '815,470 870,492 890,530 940,568 900,562 870,538 848,535 840,552 815,552'],
      ['l', '890,512 940,500 955,490 920,462 962,495 935,515'],
      ['l', '995,522 1025,530 1018,545'],
      ['l', '1040,552 1058,542 1066,560'],
      ['l', '1126,632 1137,615 1150,640 1162,682 1147,650'],
      ['l', '1098,690 1132,708 1125,715'],
      ['l', '1255,650 1295,640 1278,650 1270,672'],
      ['au', '472,718 515,695 570,682 585,645 600,640 638,610 670,618 682,590 680,578 710,575 762,590 748,622 808,655 815,645 818,600 830,562 850,612 865,620 880,672 905,685 920,715 940,725 965,755 968,800 950,855 925,920 878,938 845,940 805,925 790,897 772,895 768,870 745,880 725,850 690,840 620,852 600,872 550,875 515,888 493,878 500,860 495,820 472,768 480,765'],
      ['au', '858,962 880,970 903,965 900,1003 880,1010 865,1000'],
      ['fi', '1198,875 1225,890 1245,925 1272,925 1255,955 1235,978 1222,975 1228,955 1215,945 1230,920'],
      ['fi', '1200,965 1220,975 1180,1020 1165,1052 1140,1055 1127,1040 1150,1015 1180,995'],
      ['l', '732,350 736,346 735,352'],
      ['l', '1128,446 1134,444 1132,448'],
    ],
  },
]

const WorldMap = () => (
  <ChartSvg viewBox="0 0 1828 1036" role="img" aria-label="Downloads by country">
    <defs>
      <linearGradient id="scale">
        <stop offset="0" stopColor="#eee0c0" />
        <stop offset=".05" stopColor="#cfd0b9" />
        <stop offset=".1" stopColor="#69a5b8" />
        <stop offset=".25" stopColor="#6097b3" />
        <stop offset=".5" stopColor="#44699b" />
        <stop offset=".75" stopColor="#2c4a88" />
        <stop offset="1" stopColor="#142270" />
      </linearGradient>
    </defs>
    {sheets.map(({ transform, shapes, borders = [] }) => (
      <g key={transform} transform={transform} stroke={colors.coast} strokeWidth="2" strokeLinejoin="round">
        {shapes.map(([fill, points]) => (
          <path key={points} d={`M${points}Z`} fill={fills[fill]} vectorEffect="non-scaling-stroke" />
        ))}
        {borders.map(points => (
          <path key={points} d={`M${points}`} fill="none" vectorEffect="non-scaling-stroke" />
        ))}
      </g>
    ))}
    <rect x="716" y="905" width="402" height="24" fill="url(#scale)" />
    <path d="M817 905 V929 M917 905 V929 M1017 905 V929" stroke="white" strokeWidth="2" />
    <AxisText x="725" y="967" $anchor="middle">0</AxisText>
    <AxisText x="818" y="967" $anchor="middle">25M</AxisText>
    <AxisText x="918" y="967" $anchor="middle">50M</AxisText>
    <AxisText x="1018" y="967" $anchor="middle">75M</AxisText>
    <AxisText x="1118" y="967" $anchor="end">10...</AxisText>
  </ChartSvg>
)

/* ---------- charts ---------- */

const PieChart = () => (
  <ChartSvg viewBox="0 0 777 720" role="img" aria-label="Market share of top 10">
    <circle cx="388" cy="372" r="322" fill="#aeb0ac" />
    <path d="M388 372 V50 A322 322 0 0 1 698 286 Z" fill="#5848f2" stroke="white" strokeWidth="2" />
    <SliceText x="548" y="175">21%</SliceText>
  </ChartSvg>
)

const ticks = [4, 3, 2]

const bars = [
  [3.31, '#b53a46'],
  [3.01, '#72cabf'],
  [2.64, '#8561b8'],
  [2.25, '#ebb167'],
  [2.06, '#5f9af3'],
  [1.6, '#c7ce7e'],
  [1.55, '#a25b6c'],
  [1.52, '#5ba676'],
  [1.5, '#bd80d8'],
  [1.41, '#d08349'],
]

const BarChart = () => (
  <ChartSvg viewBox="0 0 1580 600" role="img" aria-label="Downloads of the top publishers">
    {ticks.map(m => (
      <g key={m}>
        <path d={`M151 ${96 + (4 - m) * 114} H1537`} stroke="#e4e4e4" strokeWidth="2" />
        <AxisText x="121" y={107 + (4 - m) * 112} $anchor="end">{`${m}M`}</AxisText>
      </g>
    ))}
    {bars.map(([value, fill], i) => (
      <rect key={fill} x={187 + i * 138.6} y={96 + (4 - value) * 114} width="67" height={value * 114} fill={fill} />
    ))}
    <AxisTitle transform="translate(69 321) rotate(-90)">Downloads</AxisTitle>
  </ChartSvg>
)

/* ---------- page ---------- */

const Dropdown = ({ label, option }) => (
  <SelectBox>
    <Select aria-label={label}>
      <option>{option}</option>
    </Select>
    <Chevron />
  </SelectBox>
)

const NavItem = ({ icon, label, active, chevron }) => (
  <NavLink href="#" $active={active}>
    <NavIcon>{icon}</NavIcon>
    <NavText>{label}</NavText>
    {chevron && <Chevron to={chevron} color={colors.blue} />}
  </NavLink>
)

export default class App extends Component {
  constructor(props) {
    super(props)
    this.state = {
      selected: ['us', 'br', 'fr', 'co', 'ca'],
    }
  }

  handleToggle(code) {
    const { selected } = this.state
    this.setState({
      selected: selected.includes(code)
        ? selected.filter(c => c !== code)
        : [...selected, code],
    })
  }

  render() {
    const { selected } = this.state

    return (
      <Page>
        <GlobalStyle />
        <Header>
          <Brand href="#">
            <LogoMark size={32} fill={colors.red} />
            <Wordmark>apptweak</Wordmark>
          </Brand>
          <SearchBar>
            <SearchField>
              <SearchIcon />
              <Input type="text" aria-label="Search for an app" placeholder="Search for an app" />
            </SearchField>
            <AppPicker>
              <Dropdown label="Apps" option="My apps" />
            </AppPicker>
          </SearchBar>
          <Account>
            <Dropdown label="Workspace" option="Alexandra 's Workspace" />
            <BellButton type="button" aria-label="Notifications">
              <FaBell size={40} />
            </BellButton>
          </Account>
        </Header>

        <Body>
          <Sidebar>
            <Nav>
              <NavItem icon={<BackIcon />} label="Market Intelligence" />
              <NavItem icon={<WorldIcon />} label="Market Size" />
              <NavItem icon={<ShareIcon />} label="Market Share" active chevron="up" />
              <NavLabel>BY APP</NavLabel>
              <SubLink href="#">Top Apps</SubLink>
              <SubLink href="#">Top Apps by Country</SubLink>
              <NavLabel>BY PUBLISHER</NavLabel>
              <SubLink href="#" $active>Top Publishers</SubLink>
              <SubLink href="#">Top Publishers by Country</SubLink>
              <NavItem icon={<ChartsIcon />} label="Top Charts" />
              <NavItem icon={<DownloadsIcon />} label="Downloads to top" />
              <NavItem icon={<Sun size={36} strokeWidth={2} color={colors.blue} />} label="Seasonality" chevron="right" />
            </Nav>
            <Collapse type="button">
              Collapse
              <CollapseIcon />
            </Collapse>
          </Sidebar>

          <Main>
            <Top>
              <MapPanel>
                <Countries>
                  <PanelHead>
                    <FaGlobeAmericas size={32} />
                    <Title>Country</Title>
                  </PanelHead>
                  <CountrySearch>
                    <SearchIcon />
                    <Input type="text" aria-label="Country" placeholder="E.g. United States" />
                  </CountrySearch>
                  <ListLabel>SUGGESTED COUNTRIES</ListLabel>
                  {countries.map(([code, name]) => (
                    <CountryRow key={code}>
                      <Check>
                        <Checkbox
                          type="checkbox"
                          checked={selected.includes(code)}
                          onChange={() => this.handleToggle(code)}
                        />
                        <svg width="32" height="32" viewBox="0 0 32 32" fill="none" stroke="white" strokeWidth="2">
                          <path d="M5 14.500 L13.500 22.500 L27 9.500" />
                        </svg>
                      </Check>
                      <Flag viewBox="0 0 40 28" aria-hidden="true">{flags[code]}</Flag>
                      <CountryName>{name}</CountryName>
                    </CountryRow>
                  ))}
                </Countries>
                <MapArea>
                  <WorldMap />
                  <Zoom>
                    <ZoomButton type="button" aria-label="Zoom in">+</ZoomButton>
                    <ZoomButton type="button" aria-label="Zoom out">-</ZoomButton>
                  </Zoom>
                </MapArea>
              </MapPanel>
            </Top>

            <Cards>
              <Card $span={4}>
                <CardHead>
                  <Title>Market Share of Top 10</Title>
                </CardHead>
                <ChartArea>
                  <PieChart />
                  <Download type="button" aria-label="Download">
                    <DownloadIcon />
                  </Download>
                </ChartArea>
              </Card>
              <Card $span={8}>
                <CardHead>
                  <Title>Top Publishers</Title>
                </CardHead>
                <ChartArea>
                  <BarChart />
                  <Watermark>
                    <LogoMark size={38} fill="#bdbfbc" />
                    <Wordmark $large>apptweak</Wordmark>
                  </Watermark>
                </ChartArea>
              </Card>
            </Cards>
          </Main>
        </Body>
      </Page>
    )
  }
}
